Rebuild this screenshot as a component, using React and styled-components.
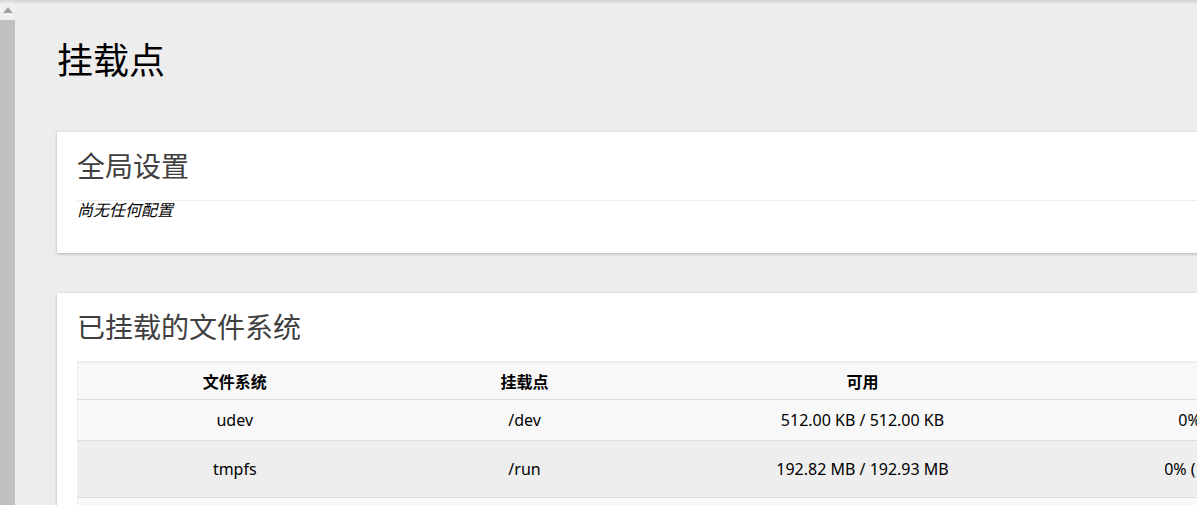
import React from "react";
import styled, { createGlobalStyle } from "styled-components";

const GlobalStyle = createGlobalStyle`
  html, body {
    margin: 0;
    padding: 0;
    background: #ededed;
    overflow: hidden;
    font-family: "Noto Sans", "Noto Sans CJK SC", sans-serif;
    color: #000;
  }
`;

const mounts = [
  { fs: "udev", point: "/dev", avail: "512.00 KB / 512.00 KB", used: "0% (0.00 B)" },
  { fs: "tmpfs", point: "/run", avail: "192.82 MB / 192.93 MB", used: "0% (112.00 KB)", unmount: true },
  { fs: "tmpfs", point: "/dev/shm", avail: "482.33 MB / 482.33 MB", used: "0% (0.00 B)", unmount: true },
];

function App() {
  return (
    <>
      <GlobalStyle />
      <Page>
        <TopShade />
        <Scrollbar>
          <ScrollButton>
            <svg width="10" height="6" viewBox="0 0 10 6">
              <path d="M0 6 L5 0 L10 6 Z" fill="#a3a3a3" />
            </svg>
          </ScrollButton>
          <ScrollTrack />
        </Scrollbar>
        <Main>
          <PageTitle>挂载点</PageTitle>

          <Card>
            <CardTitle>全局设置</CardTitle>
            <Divider />
            <Empty>尚无任何配置</Empty>
          </Card>

          <Card>
            <CardTitle>已挂载的文件系统</CardTitle>
            <Table>
              <colgroup>
                <col style={{ width: 314 }} />
                <col style={{ width: 266 }} />
                <col style={{ width: 410 }} />
                <col style={{ width: 304 }} />
                <col style={{ width: 200 }} />
              </colgroup>
              <thead>
                <tr>
                  <Th>文件系统</Th>
                  <Th>挂载点</Th>
                  <Th>可用</Th>
                  <Th>已用</Th>
                  <Th>卸载分区</Th>
                </tr>
              </thead>
              <tbody>
                {mounts.map((m, i) => (
                  <Row key={i} $odd={i % 2 === 1}>
                    <Td>{m.fs}</Td>
                    <Td>{m.point}</Td>
                    <Td>{m.avail}</Td>
                    <Td>{m.used}</Td>
                    <Td>{m.unmount && <UnmountButton>卸载分区</UnmountButton>}</Td>
                  </Row>
                ))}
              </tbody>
            </Table>
          </Card>
        </Main>
      </Page>
    </>
  );
}

const Page = styled.div`
  display: flex;
  height: 505px;
  overflow: hidden;
`;

const TopShade = styled.div`
  position: fixed;
  top: 0;
  left: 0;
  right: 0;
  height: 4px;
  background: linear-gradient(rgba(0, 0, 0, 0.12), rgba(0, 0, 0, 0));
  z-index: 5;
  pointer-events: none;
`;

const Scrollbar = styled.div`
  width: 15px;
  flex: none;
  display: flex;
  flex-direction: column;
  background: #f0f0f0;
`;

const ScrollButton = styled.div`
  height: 20px;
  display: flex;
  align-items: center;
  justify-content: center;
`;

const ScrollTrack = styled.div`
  flex: 1;
  background: #c1c1c1;
`;

const Main = styled.div`
  flex: none;
  width: 1500px;
  padding: 42px 0 0 42px;
`;

const PageTitle = styled.h2`
  margin: 0 0 52px;
  font-size: 36px;
  line-height: 38px;
  font-weight: normal;
  color: #000;
`;

const Card = styled.div`
  width: 1400px;
  background: #fff;
  box-shadow: 0 1px 3px rgba(0, 0, 0, 0.25);
  padding: 16px 20px 33px;
  margin-bottom: 40px;
`;

const CardTitle = styled.h3`
  margin: 0 0 16px;
  font-size: 28px;
  line-height: 36px;
  font-weight: normal;
  color: #404040;
`;

const Divider = styled.div`
  height: 1px;
  background: #eeeeee;
`;

const Empty = styled.em`
  display: block;
  font-size: 16px;
  line-height: 19px;
`;

const Table = styled.table`
  width: 1494px;
  table-layout: fixed;
  border-collapse: collapse;
  border-top: 2px solid #eeeeee;
  border-left: 1px solid #eeeeee;
  font-size: 16px;
`;

const Th = styled.th`
  background: #f8f8f8;
  font-weight: bold;
  font-size: 16px;
  text-align: center;
  height: 36px;
  padding: 0 8px;
  border-bottom: 1px solid #dddddd;
`;

const Row = styled.tr`
  background: ${(p) => (p.$odd ? "#eeeeee" : "#f8f8f8")};
  border-bottom: 1px solid #dddddd;
`;

const Td = styled.td`
  text-align: center;
  padding: 10px 8px;
  line-height: 20px;
  white-space: nowrap;
`;

const UnmountButton = styled.button`
  height: 36px;
  padding: 0 14px;
  border: 1px solid #c44;
  background: #fff;
  color: #c44;
  font-family: inherit;
  font-size: 14px;
  vertical-align: middle;
`;

export default App;
